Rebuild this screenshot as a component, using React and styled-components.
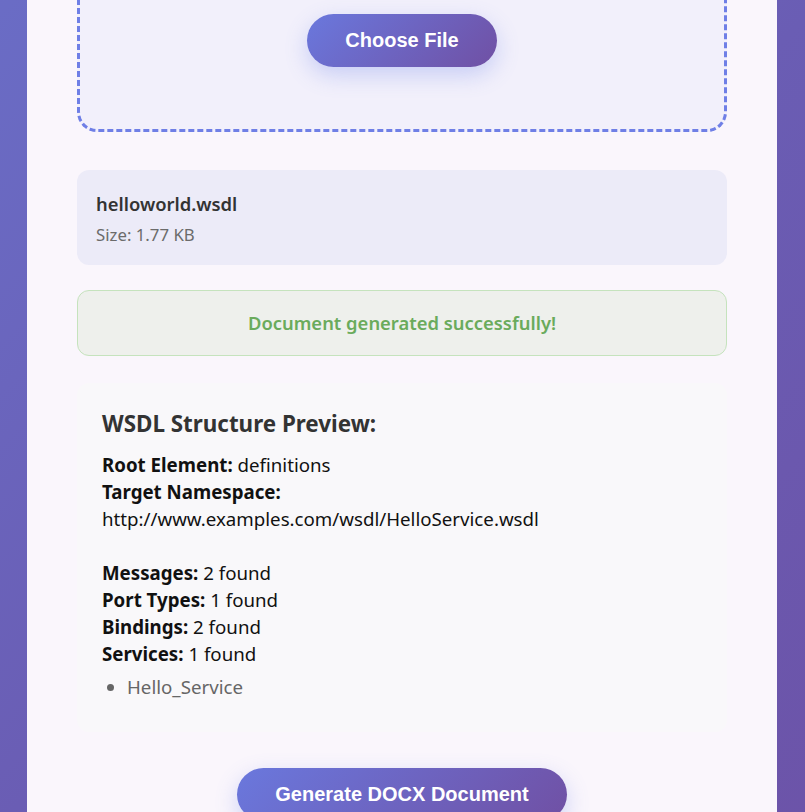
import React from "react";
import styled, { createGlobalStyle } from "styled-components";

const GlobalStyle = createGlobalStyle`
  html, body {
    margin: 0;
    padding: 0;
    overflow: hidden;
  }
  body {
    font-family: "Noto Sans", "Open Sans", sans-serif;
  }
`;

const wsdl = {
  fileName: "helloworld.wsdl",
  size: "1.77 KB",
  root: "definitions",
  namespace: "http://www.examples.com/wsdl/HelloService.wsdl",
  counts: [
    { label: "Messages", value: 2 },
    { label: "Port Types", value: 1 },
    { label: "Bindings", value: 2 },
    { label: "Services", value: 1 }
  ],
  services: ["Hello_Service"]
};

const App = () => {
  return (
    <>
      <GlobalStyle />
      <Page>
        <Card>
          <DropZone>
            <GradientButton type="button">Choose File</GradientButton>
          </DropZone>

          <FileInfo>
            <FileName>{wsdl.fileName}</FileName>
            <FileSize>Size: {wsdl.size}</FileSize>
          </FileInfo>

          <SuccessBox>Document generated successfully!</SuccessBox>

          <Preview>
            <PreviewTitle>WSDL Structure Preview:</PreviewTitle>
            <Line>
              <strong>Root Element:</strong> {wsdl.root}
            </Line>
            <Line>
              <strong>Target Namespace:</strong>
            </Line>
            <Line>{wsdl.namespace}</Line>
            <Line>&nbsp;</Line>
            {wsdl.counts.map((c) => (
              <Line key={c.label}>
                <strong>{c.label}:</strong> {c.value} found
              </Line>
            ))}
            <ServiceList>
              {wsdl.services.map((s) => (
                <li key={s}>{s}</li>
              ))}
            </ServiceList>
          </Preview>

          <Actions>
            <GradientButton type="button">Generate DOCX Document</GradientButton>
          </Actions>
        </Card>
      </Page>
    </>
  );
};

export default App;

const Page = styled.div`
  min-height: 100vh;
  padding-right: 1px;
  background: linear-gradient(135deg, #6a6dc6 0%, #6a5db4 50%, #6c53a8 100%);
`;

const Card = styled.div`
  width: 750px;
  box-sizing: border-box;
  margin: -40px auto 0;
  padding: 0 50px 60px;
  background: #faf6fc;
`;

const DropZone = styled.div`
  display: flex;
  justify-content: center;
  padding: 51px 20px 62px;
  border: 3px dashed #6f7fe6;
  border-radius: 20px;
  background: #f2f0fb;
`;

const GradientButton = styled.button`
  font-family: "Liberation Sans", Arial, sans-serif;
  font-size: 20px;
  font-weight: bold;
  color: #fff;
  padding: 15px 38px;
  border: none;
  border-radius: 30px;
  background: linear-gradient(135deg, #6a78dd 0%, #7050a4 100%);
  box-shadow: 0 8px 22px rgba(102, 126, 234, 0.3);
  cursor: pointer;
`;

const FileInfo = styled.div`
  margin-top: 38px;
  padding: 19px 19px 20px;
  border-radius: 12px;
  background: #ecebf8;
`;

const FileName = styled.div`
  font-size: 18.4px;
  font-weight: 600;
  line-height: 30px;
  color: #333;
  margin-bottom: 6px;
`;

const FileSize = styled.div`
  font-size: 16.8px;
  line-height: 20px;
  color: #6b6b6b;
`;

const SuccessBox = styled.div`
  margin-top: 25px;
  padding: 20px;
  border: 1px solid #c5e3bd;
  border-radius: 12px;
  background: #eef0ec;
  color: #6aab5c;
  font-size: 18.4px;
  font-weight: 600;
  line-height: 24px;
  text-align: center;
`;

const Preview = styled.div`
  margin-top: 27px;
  padding: 25px 25px 32px;
  border-radius: 12px;
  background: #f9f8fa;
`;

const PreviewTitle = styled.h3`
  margin: 0 0 12px;
  font-size: 22.4px;
  font-weight: bold;
  line-height: 31px;
  color: #333;
`;

const Line = styled.div`
  font-size: 18.7px;
  line-height: 27px;
  color: #111;

  strong {
    font-weight: bold;
  }
`;

const ServiceList = styled.ul`
  margin: 6px 0 0;
  padding-left: 25px;
  color: #666;
  font-size: 18.7px;
  line-height: 27px;
`;

const Actions = styled.div`
  display: flex;
  justify-content: center;
  margin-top: 36px;
`;
